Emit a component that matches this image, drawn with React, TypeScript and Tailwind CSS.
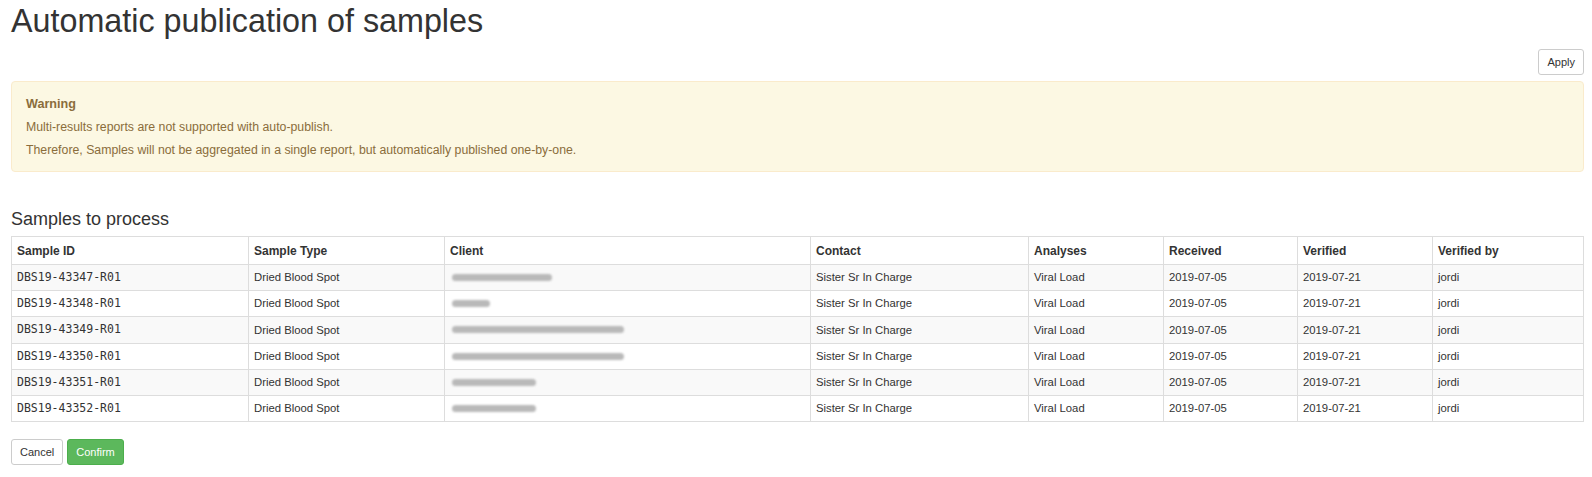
import React from "react";

type Sample = {
  id: string;
  type: string;
  clientBar: string;
  contact: string;
  analyses: string;
  received: string;
  verified: string;
  verifiedBy: string;
};

const samples: Sample[] = [
  { id: "DBS19-43347-R01", type: "Dried Blood Spot", clientBar: "w-[100px]", contact: "Sister Sr In Charge", analyses: "Viral Load", received: "2019-07-05", verified: "2019-07-21", verifiedBy: "jordi" },
  { id: "DBS19-43348-R01", type: "Dried Blood Spot", clientBar: "w-[38px]", contact: "Sister Sr In Charge", analyses: "Viral Load", received: "2019-07-05", verified: "2019-07-21", verifiedBy: "jordi" },
  { id: "DBS19-43349-R01", type: "Dried Blood Spot", clientBar: "w-[172px]", contact: "Sister Sr In Charge", analyses: "Viral Load", received: "2019-07-05", verified: "2019-07-21", verifiedBy: "jordi" },
  { id: "DBS19-43350-R01", type: "Dried Blood Spot", clientBar: "w-[172px]", contact: "Sister Sr In Charge", analyses: "Viral Load", received: "2019-07-05", verified: "2019-07-21", verifiedBy: "jordi" },
  { id: "DBS19-43351-R01", type: "Dried Blood Spot", clientBar: "w-[84px]", contact: "Sister Sr In Charge", analyses: "Viral Load", received: "2019-07-05", verified: "2019-07-21", verifiedBy: "jordi" },
  { id: "DBS19-43352-R01", type: "Dried Blood Spot", clientBar: "w-[84px]", contact: "Sister Sr In Charge", analyses: "Viral Load", received: "2019-07-05", verified: "2019-07-21", verifiedBy: "jordi" },
];

const columns = [
  { label: "Sample ID", width: "w-[237px]" },
  { label: "Sample Type", width: "w-[196px]" },
  { label: "Client", width: "w-[366px]" },
  { label: "Contact", width: "w-[218px]" },
  { label: "Analyses", width: "w-[135px]" },
  { label: "Received", width: "w-[134px]" },
  { label: "Verified", width: "w-[135px]" },
  { label: "Verified by", width: "" },
];

const cell = "border border-[#ddd] px-[5px] h-[26.2px] align-middle";

export default function App() {
  return (
    <div className="min-h-screen bg-white pl-[11px] pr-[8px] text-[#333] font-['Liberation_Sans',Arial,sans-serif]">
      {/* Page title */}
      <h1 className="pt-[4px] text-[32.3px] leading-[35px] font-normal">Automatic publication of samples</h1>

      <div className="flex justify-end mt-[10px]">
        <button className="h-[26px] px-[8px] border border-[#ccc] rounded-[3px] bg-white text-[11px] text-[#333]">
          Apply
        </button>
      </div>

      {/* Warning box */}
      <div className="mt-[6px] border border-[#faebcc] bg-[#fcf8e3] rounded-[4px] px-[14px] pt-[11px] pb-[9px] text-[#8a6d3b] text-[12.3px] leading-[23px]">
        <div className="font-bold text-[12.6px]">Warning</div>
        <div>Multi-results reports are not supported with auto-publish.</div>
        <div>Therefore, Samples will not be aggregated in a single report, but automatically published one-by-one.</div>
      </div>

      {/* Samples table */}
      <h2 className="mt-[37px] text-[18px] leading-[20px] font-normal">Samples to process</h2>
      <table className="mt-[7px] w-full border-collapse border border-[#ddd] text-[11.3px]">
        <thead>
          <tr>
            {columns.map((c) => (
              <th key={c.label} className={`${c.width} border border-[#ddd] px-[5px] h-[28px] text-left font-bold text-[12px]`}>
                {c.label}
              </th>
            ))}
          </tr>
        </thead>
        <tbody>
          {samples.map((s, idx) => (
            <tr key={s.id} className={idx % 2 === 0 ? "bg-[#f9f9f9]" : "bg-white"}>
              <td className={`${cell} font-['DejaVu_Sans_Mono',monospace] text-[11.5px]`}>{s.id}</td>
              <td className={cell}>{s.type}</td>
              <td className={cell}>
                <div className={`${s.clientBar} h-[7px] ml-[2px] rounded-full bg-[#b9b9b9] blur-[1.2px]`} />
              </td>
              <td className={cell}>{s.contact}</td>
              <td className={cell}>{s.analyses}</td>
              <td className={cell}>{s.received}</td>
              <td className={cell}>{s.verified}</td>
              <td className={cell}>{s.verifiedBy}</td>
            </tr>
          ))}
        </tbody>
      </table>

      {/* Actions */}
      <div className="flex gap-[4px] mt-[17px]">
        <button className="h-[26px] px-[8px] border border-[#ccc] rounded-[3px] bg-white text-[11px] text-[#333]">
          Cancel
        </button>
        <button className="h-[26px] px-[8px] border border-[#4cae4c] rounded-[3px] bg-[#5cb85c] text-[11px] text-white">
          Confirm
        </button>
      </div>
    </div>
  );
}
